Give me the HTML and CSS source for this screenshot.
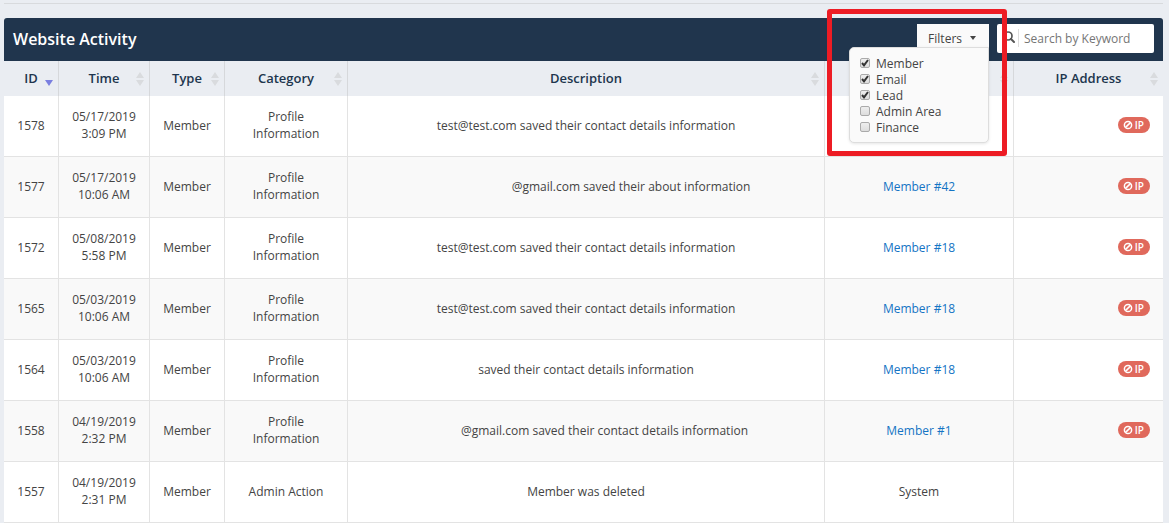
FILE: index.html
```html
<!doctype html>
<html lang="en">
  <head>
    <meta charset="utf-8">
    <title>Website Activity</title>
    <link rel="stylesheet" href="styles.css">
  </head>
  <body>
    <svg class="sprite" aria-hidden="true">
      <symbol id="sort" viewBox="0 0 8 14">
        <path d="M4 0 L8 6 H0 Z M0 8 H8 L4 14 Z" fill="currentColor"/>
      </symbol>
      <symbol id="sort-desc" viewBox="0 0 8 14">
        <path d="M0 8 H8 L4 14 Z" fill="currentColor"/>
      </symbol>
      <symbol id="ban" viewBox="0 0 10 10">
        <circle cx="5" cy="5" r="3.6" fill="none" stroke="currentColor" stroke-width="1.5"/>
        <path d="M2.6 7.4 L7.4 2.6" stroke="currentColor" stroke-width="1.5"/>
      </symbol>
    </svg>

    <hr class="divider">

    <div class="panel">
      <div class="panel-header">
        <h1>Website Activity</h1>

        <div class="filters">
          <button type="button" class="filters-toggle" aria-expanded="true">Filters <span class="caret"></span></button>
          <div class="filters-menu">
            <label><input type="checkbox" checked> Member</label>
            <label><input type="checkbox" checked> Email</label>
            <label><input type="checkbox" checked> Lead</label>
            <label><input type="checkbox"> Admin Area</label>
            <label><input type="checkbox"> Finance</label>
          </div>
          <div class="highlight"></div>
        </div>

        <label class="search">
          <svg class="search-icon" viewBox="0 0 12 12" aria-hidden="true">
            <circle cx="5" cy="5" r="4" fill="none" stroke="currentColor" stroke-width="1.7"/>
            <path d="M8 8 L11 11" stroke="currentColor" stroke-width="2" stroke-linecap="round"/>
          </svg>
          <input type="text" placeholder="Search by Keyword" aria-label="Search by Keyword">
        </label>
      </div>

      <table class="activity">
        <colgroup>
          <col class="col-id">
          <col class="col-time">
          <col class="col-type">
          <col class="col-category">
          <col class="col-description">
          <col class="col-account">
          <col class="col-ip">
        </colgroup>
        <thead>
          <tr>
            <th><button type="button" class="sort active"><span>ID</span><svg><use href="#sort-desc"/></svg></button></th>
            <th><button type="button" class="sort"><span>Time</span><svg><use href="#sort"/></svg></button></th>
            <th><button type="button" class="sort"><span>Type</span><svg><use href="#sort"/></svg></button></th>
            <th><button type="button" class="sort"><span>Category</span><svg><use href="#sort"/></svg></button></th>
            <th><button type="button" class="sort"><span>Description</span><svg><use href="#sort"/></svg></button></th>
            <th><button type="button" class="sort" aria-label="Account"><span></span><svg><use href="#sort"/></svg></button></th>
            <th><button type="button" class="sort"><span>IP Address</span><svg><use href="#sort"/></svg></button></th>
          </tr>
        </thead>
        <tbody>
          <tr>
            <td>1578</td>
            <td>05/17/2019<br>3:09 PM</td>
            <td>Member</td>
            <td>Profile<br>Information</td>
            <td>test@test.com saved their contact details information</td>
            <td></td>
            <td class="ip"><a class="badge" href="#"><svg><use href="#ban"/></svg>IP</a></td>
          </tr>
          <tr>
            <td>1577</td>
            <td>05/17/2019<br>10:06 AM</td>
            <td>Member</td>
            <td>Profile<br>Information</td>
            <td><span class="hidden-name long"></span>@gmail.com saved their about information</td>
            <td><a href="#">Member #42</a></td>
            <td class="ip"><a class="badge" href="#"><svg><use href="#ban"/></svg>IP</a></td>
          </tr>
          <tr>
            <td>1572</td>
            <td>05/08/2019<br>5:58 PM</td>
            <td>Member</td>
            <td>Profile<br>Information</td>
            <td>test@test.com saved their contact details information</td>
            <td><a href="#">Member #18</a></td>
            <td class="ip"><a class="badge" href="#"><svg><use href="#ban"/></svg>IP</a></td>
          </tr>
          <tr>
            <td>1565</td>
            <td>05/03/2019<br>10:06 AM</td>
            <td>Member</td>
            <td>Profile<br>Information</td>
            <td>test@test.com saved their contact details information</td>
            <td><a href="#">Member #18</a></td>
            <td class="ip"><a class="badge" href="#"><svg><use href="#ban"/></svg>IP</a></td>
          </tr>
          <tr>
            <td>1564</td>
            <td>05/03/2019<br>10:06 AM</td>
            <td>Member</td>
            <td>Profile<br>Information</td>
            <td>saved their contact details information</td>
            <td><a href="#">Member #18</a></td>
            <td class="ip"><a class="badge" href="#"><svg><use href="#ban"/></svg>IP</a></td>
          </tr>
          <tr>
            <td>1558</td>
            <td>04/19/2019<br>2:32 PM</td>
            <td>Member</td>
            <td>Profile<br>Information</td>
            <td><span class="hidden-name"></span>@gmail.com saved their contact details information</td>
            <td><a href="#">Member #1</a></td>
            <td class="ip"><a class="badge" href="#"><svg><use href="#ban"/></svg>IP</a></td>
          </tr>
          <tr>
            <td>1557</td>
            <td>04/19/2019<br>2:31 PM</td>
            <td>Member</td>
            <td>Admin Action</td>
            <td>Member was deleted</td>
            <td>System</td>
            <td class="ip"></td>
          </tr>
        </tbody>
      </table>
    </div>
  </body>
</html>
```

FILE: styles.css
```css
* {
  box-sizing: border-box;
}

body {
  margin: 0;
  padding: 0 6px 0 4px;
  background-color: #eaedf2;
  color: #444;
  font-family: "Open Sans", sans-serif;
  font-size: 12px;
  line-height: 17px;
}

button,
input {
  font-family: inherit;
  font-size: inherit;
  color: inherit;
}

a {
  color: #1474c4;
  text-decoration: none;
}

.sprite {
  display: none;
}

.divider {
  height: 1px;
  margin: 3px 0 14px;
  border: 0;
  background-color: #d8dadd;
}

/* header bar */
.panel-header {
  display: flex;
  align-items: flex-start;
  gap: 8px;
  padding: 6px 9px;
  background-color: #20354d;
  border-radius: 3px 3px 0 0;
}

.panel-header h1 {
  flex: 1;
  margin: 0;
  color: #fff;
  font-size: 16px;
  font-weight: 600;
  line-height: 31px;
}

.filters {
  position: relative;
}

.filters-toggle {
  display: flex;
  align-items: center;
  gap: 8px;
  height: 24px;
  padding: 4px 13px 0 11px;
  border: 0;
  background-color: #fafafa;
}

.caret {
  border: 3px solid transparent;
  border-top: 4px solid #444;
  border-bottom: 0;
}

.filters-menu {
  position: absolute;
  z-index: 2;
  top: 23px;
  right: 0;
  width: 140px;
  padding: 8px 10px 6px;
  background-color: #fafafa;
  border: 1px solid #ddd;
  border-radius: 5px 0 5px 5px;
  box-shadow: 0 1px 3px rgba(0, 0, 0, .1);
}

.filters-menu label {
  display: flex;
  align-items: center;
  gap: 6px;
  line-height: 16px;
}

.filters-menu input {
  appearance: none;
  width: 10px;
  height: 10px;
  margin: 0 0 2px;
  border: 1px solid #aaa;
  border-radius: 2px;
  background: linear-gradient(#eee, #ddd);
}

.filters-menu input:checked {
  background: url("data:image/svg+xml,%3Csvg xmlns='http://www.w3.org/2000/svg' viewBox='0 0 8 8'%3E%3Cpath d='M1 4 L3 6.3 L7 1' fill='none' stroke='%23333' stroke-width='2'/%3E%3C/svg%3E") center / 8px 8px no-repeat, linear-gradient(#eee, #ddd);
}

.highlight {
  position: absolute;
  z-index: 3;
  top: -15px;
  right: -18px;
  width: 180px;
  height: 147px;
  border: 5px solid #ed1c24;
  border-radius: 3px;
  pointer-events: none;
}

.search {
  display: flex;
  width: 157px;
  height: 29px;
  padding: 5px 6px 6px;
  background-color: #fff;
  border-radius: 2px;
}

.search-icon {
  flex: none;
  width: 12px;
  height: 12px;
  margin: 2px 3px 0 0;
  color: #555;
}

.search input {
  flex: 1;
  min-width: 0;
  padding: 1px 0 0 5px;
  border: 0;
  border-left: 1px solid #ddd;
  outline: 0;
  background: none;
}

.search input::placeholder {
  color: #757575;
}

/* table */
.activity {
  width: 100%;
  table-layout: fixed;
  border-collapse: separate;
  border-spacing: 0;
  text-align: center;
}

.col-id { width: 55px; }
.col-time { width: 91px; }
.col-type { width: 75px; }
.col-category { width: 123px; }
.col-account { width: 189px; }
.col-ip { width: 149px; }

.activity th {
  height: 35px;
  padding: 0;
  border-right: 1px solid #d6d8db;
}

.activity td {
  height: 61px;
  padding: 0 0 2px;
  background-color: #fff;
  border-right: 1px solid #e3e3e3;
  border-bottom: 1px solid #e3e3e3;
}

.activity tr:nth-child(even) td {
  background-color: #f9f9f9;
}

.activity th:last-child,
.activity td:last-child {
  border-right: 0;
}

.sort {
  display: grid;
  grid-template-columns: 1fr auto 1fr;
  align-items: center;
  width: 100%;
  padding: 0 5px;
  border: 0;
  background: none;
  color: #20354d;
  font-size: 13px;
  font-weight: 600;
  line-height: 17px;
}

.sort span {
  grid-column: 2;
}

.sort svg {
  justify-self: end;
  width: 8px;
  height: 14px;
  color: #d9dbde;
}

.sort.active svg {
  color: #7a7fe0;
}

.hidden-name {
  display: inline-block;
  width: 37px;
}

.hidden-name.long {
  width: 90px;
}

.activity .ip {
  padding: 0 13px 4px 0;
  text-align: right;
}

.badge {
  display: inline-flex;
  align-items: center;
  gap: 2px;
  height: 16px;
  padding: 0 6px 0 5px;
  border-radius: 8px;
  background-color: #e0695c;
  color: #fff;
  font-size: 10px;
  font-weight: 600;
  line-height: 16px;
  vertical-align: middle;
}

.badge svg {
  width: 10px;
  height: 10px;
}
```
